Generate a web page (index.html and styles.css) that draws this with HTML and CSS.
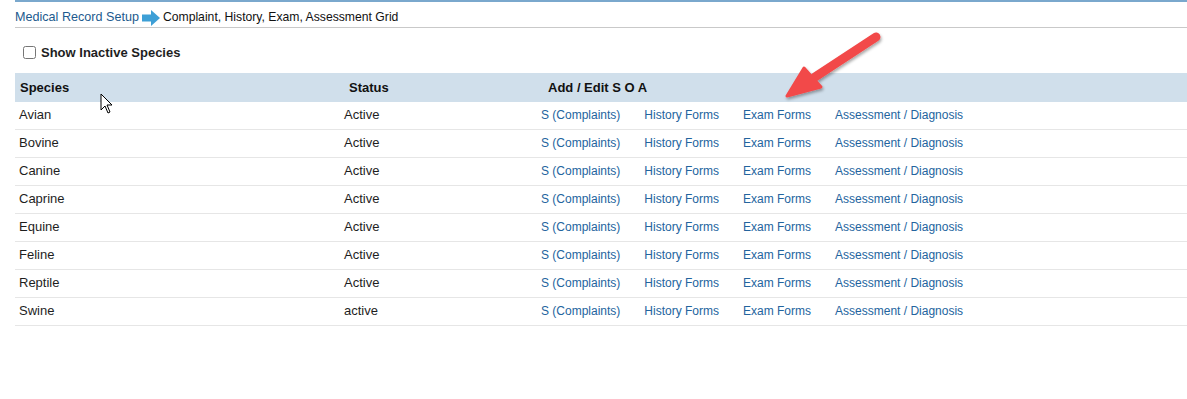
FILE: index.html
```html
<!DOCTYPE html>
<html>
<head>
<meta charset="utf-8">
<link rel="stylesheet" href="styles.css">
</head>
<body>
<div class="page">
  <div class="topline"></div>
  <div class="crumbs">
    <a class="crumb-link">Medical Record Setup</a>
    <svg class="crumb-arrow" width="18" height="16" viewBox="0 0 18 16"><path d="M0 4.5 H9 V0 L18 8 L9 16 V11.5 H0 Z" fill="#3d9fd6"/></svg>
    <span class="crumb-current">Complaint, History, Exam, Assessment Grid</span>
  </div>
  <label class="toggle"><input type="checkbox" class="chk"><span>Show Inactive Species</span></label>
  <table class="grid">
    <colgroup><col class="w-species"><col class="w-status"><col></colgroup>
    <thead>
      <tr><th class="c-species">Species</th><th class="c-status">Status</th><th class="c-links">Add / Edit S O A</th></tr>
    </thead>
    <tbody>
      <tr><td class="c-species">Avian</td><td class="c-status">Active</td><td class="c-links"><a>S (Complaints)</a><a>History Forms</a><a>Exam Forms</a><a>Assessment / Diagnosis</a></td></tr>
      <tr><td class="c-species">Bovine</td><td class="c-status">Active</td><td class="c-links"><a>S (Complaints)</a><a>History Forms</a><a>Exam Forms</a><a>Assessment / Diagnosis</a></td></tr>
      <tr><td class="c-species">Canine</td><td class="c-status">Active</td><td class="c-links"><a>S (Complaints)</a><a>History Forms</a><a>Exam Forms</a><a>Assessment / Diagnosis</a></td></tr>
      <tr><td class="c-species">Caprine</td><td class="c-status">Active</td><td class="c-links"><a>S (Complaints)</a><a>History Forms</a><a>Exam Forms</a><a>Assessment / Diagnosis</a></td></tr>
      <tr><td class="c-species">Equine</td><td class="c-status">Active</td><td class="c-links"><a>S (Complaints)</a><a>History Forms</a><a>Exam Forms</a><a>Assessment / Diagnosis</a></td></tr>
      <tr><td class="c-species">Feline</td><td class="c-status">Active</td><td class="c-links"><a>S (Complaints)</a><a>History Forms</a><a>Exam Forms</a><a>Assessment / Diagnosis</a></td></tr>
      <tr><td class="c-species">Reptile</td><td class="c-status">Active</td><td class="c-links"><a>S (Complaints)</a><a>History Forms</a><a>Exam Forms</a><a>Assessment / Diagnosis</a></td></tr>
      <tr><td class="c-species">Swine</td><td class="c-status">active</td><td class="c-links"><a>S (Complaints)</a><a>History Forms</a><a>Exam Forms</a><a>Assessment / Diagnosis</a></td></tr>
    </tbody>
  </table>
  <svg class="red-arrow" width="110" height="80" viewBox="0 0 110 80">
    <defs>
      <filter id="sh" x="-20%" y="-20%" width="140%" height="140%">
        <feDropShadow dx="1" dy="2" stdDeviation="1.5" flood-color="#000" flood-opacity="0.35"/>
      </filter>
    </defs>
    <g filter="url(#sh)">
      <line x1="101" y1="12" x2="40" y2="52" stroke="#f24a4a" stroke-width="9" stroke-linecap="round"/>
      <path d="M12 71 L29 43 L46 62 Z" fill="#f24a4a" stroke="#f24a4a" stroke-width="3" stroke-linejoin="round"/>
    </g>
  </svg>
  <svg class="cursor" width="14" height="22" viewBox="0 0 14 22">
    <path d="M1 1 V17 L5 13 L8 20 L10 19 L7 12 H12 Z" fill="#fff" stroke="#000" stroke-width="1" stroke-linejoin="miter"/>
  </svg>
</div>
</body>
</html>
```

FILE: styles.css
```css
html, body {
  margin: 0;
  padding: 0;
  background: #fff;
}
body {
  font-family: "Liberation Sans", Arial, sans-serif;
  color: #1e1e1e;
}
.page {
  position: relative;
  padding-left: 15px;
  width: 1172px;
  height: 399px;
  overflow: hidden;
}
.topline {
  height: 2px;
  background: #7aa8cd;
}
.crumbs {
  display: flex;
  align-items: center;
  height: 21px;
  padding-top: 4px;
  border-bottom: 1px solid #c9c9c9;
  font-size: 12px;
}
.crumb-link {
  color: #1d5a8e;
  font-size: 12.6px;
}
.crumb-arrow {
  margin-left: 3px;
  margin-right: 3px;
  margin-top: 2px;
}
.crumb-current {
  color: #111;
  font-size: 12.2px;
}
.toggle {
  display: flex;
  align-items: center;
  margin-top: 14px;
  padding-left: 8px;
  height: 20px;
  font-size: 13px;
  font-weight: bold;
  color: #1e1e1e;
}
.chk {
  width: 13px;
  height: 13px;
  margin: 0 5px 0 0;
}
.grid {
  margin-top: 11px;
  width: 100%;
  table-layout: fixed;
  border-collapse: collapse;
  font-size: 13px;
}
.w-species { width: 325px; }
.w-status { width: 197px; }
.grid thead th {
  background: #d0dfeb;
  height: 29px;
  padding: 0;
  text-align: left;
  font-weight: bold;
  color: #111;
}
.grid tbody td {
  height: 25px;
  padding: 0 0 2px 0;
  border-bottom: 1px solid #e6e6e6;
  color: #1e1e1e;
  white-space: nowrap;
}
.grid thead th.c-species { padding-left: 5px; }
.grid tbody td.c-species { padding-left: 4px; }
.grid thead th.c-status { padding-left: 9px; }
.grid tbody td.c-status { padding-left: 4px; }
.grid thead th.c-links { padding-left: 11px; }
.grid tbody td.c-links { padding-left: 4px; font-size: 12px; }
.grid td.c-links a {
  color: #23649e;
  margin-right: 24px;
}
.red-arrow {
  position: absolute;
  left: 775px;
  top: 25px;
}
.cursor {
  position: absolute;
  left: 100px;
  top: 93px;
}
```
